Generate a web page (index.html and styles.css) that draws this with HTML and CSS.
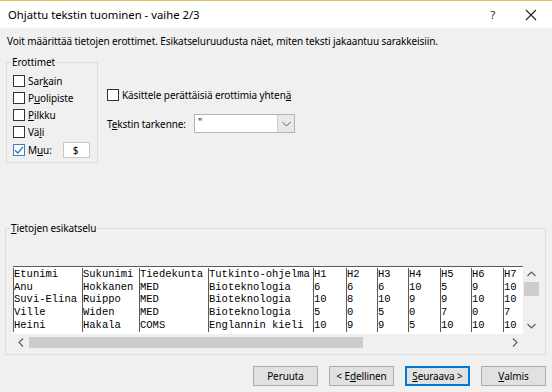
FILE: index.html
```html
<!DOCTYPE html>
<html lang="fi">
<head>
<meta charset="utf-8">
<title>Ohjattu tekstin tuominen</title>
<link rel="stylesheet" href="styles.css">
</head>
<body>
<div class="window">
  <div class="titlebar">
    <span class="title">Ohjattu tekstin tuominen - vaihe 2/3</span>
    <span class="help">?</span>
    <span class="close"><svg width="12" height="12" viewBox="0 0 12 12"><path d="M1 1L11 11M11 1L1 11" stroke="#222" stroke-width="1.1" fill="none"/></svg></span>
  </div>
  <div class="content">
    <p class="intro">Voit määrittää tietojen erottimet. Esikatseluruudusta näet, miten teksti jakaantuu sarakkeisiin.</p>
    <div class="options">
      <fieldset class="group seps">
        <legend>Erottimet</legend>
        <div class="check"><span class="box"></span><span>Sar<u>k</u>ain</span></div>
        <div class="check"><span class="box"></span><span>P<u>u</u>olipiste</span></div>
        <div class="check"><span class="box"></span><span><u>P</u>ilkku</span></div>
        <div class="check"><span class="box"></span><span>Vä<u>l</u>i</span></div>
        <div class="check muu"><span class="box checked"><svg width="10" height="10" viewBox="0 0 10 10"><path d="M1 5.2L3.8 8L9 1.8" stroke="#2f6fc0" stroke-width="1.3" fill="none"/></svg></span><span class="muu-label">M<u>u</u>u:</span><span class="field">$</span></div>
      </fieldset>
      <div class="side">
        <div class="check"><span class="box"></span><span>Käsittele perättäisiä erottimia yhten<u>ä</u></span></div>
        <div class="qualifier">
          <span class="q-label">T<u>e</u>kstin tarkenne:</span>
          <span class="combo"><span class="value">"</span><span class="drop"><svg width="9" height="6" viewBox="0 0 9 6"><path d="M0.5 1L4.5 5L8.5 1" stroke="#606060" stroke-width="1" fill="none"/></svg></span></span>
        </div>
      </div>
    </div>
    <fieldset class="group preview">
      <legend><u>T</u>ietojen esikatselu</legend>
      <div class="grid-wrap">
        <div class="data">
          <table>
            <colgroup>
              <col style="width:69px"><col style="width:57px"><col style="width:69px"><col style="width:105px"><col style="width:33px"><col style="width:31px"><col style="width:31px"><col style="width:32px"><col style="width:31px"><col style="width:32px"><col style="width:20px">
            </colgroup>
            <tr><td>Etunimi</td><td>Sukunimi</td><td>Tiedekunta</td><td>Tutkinto-ohjelma</td><td>H1</td><td>H2</td><td>H3</td><td>H4</td><td>H5</td><td>H6</td><td>H7</td></tr>
            <tr><td>Anu</td><td>Hokkanen</td><td>MED</td><td>Bioteknologia</td><td>6</td><td>6</td><td>6</td><td>10</td><td>5</td><td>9</td><td>10</td></tr>
            <tr><td>Suvi-Elina</td><td>Ruippo</td><td>MED</td><td>Bioteknologia</td><td>10</td><td>8</td><td>10</td><td>9</td><td>9</td><td>10</td><td>10</td></tr>
            <tr><td>Ville</td><td>Widen</td><td>MED</td><td>Bioteknologia</td><td>5</td><td>0</td><td>5</td><td>0</td><td>7</td><td>0</td><td>7</td></tr>
            <tr><td>Heini</td><td>Hakala</td><td>COMS</td><td>Englannin kieli</td><td>10</td><td>9</td><td>9</td><td>5</td><td>10</td><td>10</td><td>10</td></tr>
          </table>
        </div>
        <div class="vscroll">
          <span class="arrow"><svg width="9" height="6" viewBox="0 0 9 6"><path d="M0.5 5L4.5 1L8.5 5" stroke="#606060" stroke-width="1.2" fill="none"/></svg></span>
          <span class="vthumb"></span>
          <span class="vspace"></span>
          <span class="arrow"><svg width="9" height="6" viewBox="0 0 9 6"><path d="M0.5 1L4.5 5L8.5 1" stroke="#606060" stroke-width="1.2" fill="none"/></svg></span>
        </div>
        <div class="hscroll">
          <span class="harrow"><svg width="6" height="9" viewBox="0 0 6 9"><path d="M5 0.5L1 4.5L5 8.5" stroke="#606060" stroke-width="1.2" fill="none"/></svg></span>
          <span class="hthumb"></span>
          <span class="hspace"></span>
          <span class="harrow"><svg width="6" height="9" viewBox="0 0 6 9"><path d="M1 0.5L5 4.5L1 8.5" stroke="#606060" stroke-width="1.2" fill="none"/></svg></span>
        </div>
        <div class="corner"></div>
      </div>
    </fieldset>
    <div class="buttons">
      <span class="btn">Peruuta</span>
      <span class="btn">&lt; E<u>d</u>ellinen</span>
      <span class="btn default"><u>S</u>euraava &gt;</span>
      <span class="btn"><u>V</u>almis</span>
    </div>
  </div>
</div>
</body>
</html>
```
FILE: styles.css
```css
* { box-sizing: border-box; }
html, body { margin: 0; padding: 0; }
body {
  width: 552px;
  height: 392px;
  overflow: hidden;
  background: #f0f0f0;
  font-family: "Noto Sans", "Open Sans", sans-serif;
  font-size: 10px;
  letter-spacing: -0.1px;
  color: #000;
}
u { text-decoration: underline; text-underline-offset: 1px; }
.window { width: 552px; height: 392px; display: flex; flex-direction: column; }
.titlebar {
  height: 28px;
  background: #fff;
  border-top: 1px solid #e3c15a;
  display: flex;
  align-items: center;
  padding-left: 8px;
  font-size: 11.3px;
  letter-spacing: 0;
}
.title { flex: 1; }
.help { width: 20px; text-align: center; margin-right: 22px; font-size: 11px; color: #222; }
.close { width: 12px; height: 12px; margin-right: 15px; display: flex; }
.content { flex: 1; background: #f0f0f0; }
.intro { margin: 6px 0 0 7px; line-height: 14px; height: 14px; }
.options { display: flex; margin-top: 7px; height: 108px; }
.group {
  margin: 0;
  border: 1px solid #dcdcdc;
  min-width: 0;
}
.group legend { padding: 0 1px; line-height: 14px; }
.seps {
  margin-left: 6px;
  width: 92px;
  padding: 3px 0 2px 6px;
}
.seps legend { margin-left: -2px; }
.check { display: flex; align-items: center; height: 17px; white-space: nowrap; }
.box {
  width: 12px; height: 12px;
  border: 1px solid #333;
  background: #fff;
  margin-right: 3px;
  flex: none;
  display: flex; align-items: center; justify-content: center;
}
.box.checked { border-color: #3d7bc4; }
.check.muu { height: 19px; }
.muu-label { width: 35px; }
.field {
  width: 27px; height: 16px;
  background: #fff;
  border: 1px solid #c8c8c8;
  display: flex; align-items: center; justify-content: center;
  padding-right: 2px;
}
.side { margin-left: 9px; padding-top: 31px; }
.qualifier { display: flex; align-items: center; margin-top: 11px; height: 19px; }
.q-label { width: 87px; }
.combo {
  width: 101px; height: 19px;
  background: #fff;
  border: 1px solid #b4b4b4;
  display: flex;
}
.value { flex: 1; padding-left: 3px; line-height: 15px; color: #000; }
.drop {
  width: 17px;
  background: #e8e8e8;
  border-left: 1px solid #d0d0d0;
  display: flex; align-items: center; justify-content: center;
}
.preview {
  margin: 58px 6px 0 5px;
  padding: 0 0 3px 7px;
  height: 134px;
}
.preview legend { margin-left: -3px; }
.grid-wrap {
  margin-top: 31px;
  display: grid;
  grid-template-columns: 510px 17px;
  grid-template-rows: 68px 16px;
  width: 527px;
}
.data {
  background: #fff;
  border-top: 1px solid #5a5a5a;
  overflow: hidden;
  padding-top: 1px;
}
.data table {
  border-collapse: collapse;
  table-layout: fixed;
  width: 510px;
  font-family: "Liberation Mono", "DejaVu Sans Mono", monospace;
  font-size: 10.5px;
  letter-spacing: 0;
}
.data td {
  border-left: 1px solid #5a5a5a;
  padding: 0;
  height: 12.5px;
  line-height: 12.5px;
  white-space: nowrap;
  overflow: hidden;
}
.data tr:last-child td { height: 13.5px; }
.vscroll {
  background: #f0f0f0;
  display: flex; flex-direction: column; align-items: center;
}
.vscroll .arrow { height: 16px; display: flex; align-items: center; justify-content: center; width: 17px; }
.vthumb { width: 15px; height: 14px; background: #cdcdcd; }
.vspace { flex: 1; }
.hscroll {
  background: #f0f0f0;
  display: flex; align-items: center;
}
.harrow { width: 16px; height: 16px; display: flex; align-items: center; justify-content: center; }
.hthumb { width: 334px; height: 11px; background: #cdcdcd; }
.hspace { flex: 1; }
.corner { background: #f0f0f0; }
.buttons {
  display: flex;
  justify-content: flex-end;
  gap: 11px;
  margin-top: 11px;
  padding-right: 6px;
}
.btn {
  width: 65px; height: 20px;
  background: #e1e1e1;
  border: 1px solid #adadad;
  display: flex; align-items: center; justify-content: center;
  font-size: 10px;
}
.btn.default { border: 1px solid #0078d7; box-shadow: inset 0 0 0 1px #0078d7; }
```
